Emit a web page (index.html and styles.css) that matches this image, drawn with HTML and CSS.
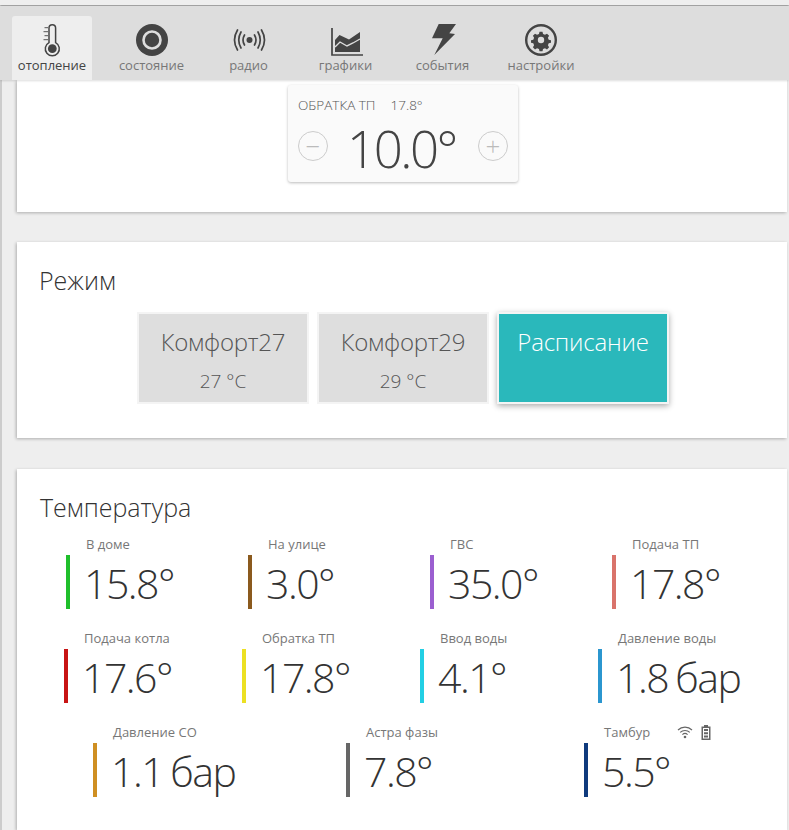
FILE: index.html
```html
<!DOCTYPE html>
<html lang="ru">
<head>
  <meta charset="UTF-8" />
  <title>Отопление</title>
  <link rel="stylesheet" href="styles.css">
</head>
<body>
  <div class="topstrip"></div>
  <nav class="tabs">
    <a class="tab active">
      <svg class="icon" viewBox="0 0 34 34"><path d="M14 5a3.300 3.300 0 0 1 6.600 0v14.600a7 7 0 1 1-6.600 0z" fill="none" stroke="#444" stroke-width="1.500"/><circle cx="17.300" cy="25.700" r="4.400" fill="#444"/><path d="M9.500 4.700h3.500M8.500 8.700h4.500M9.500 12.700h3.500M8.500 16.700h4.500" stroke="#555" stroke-width="1"/></svg>
      отопление
    </a>
    <a class="tab">
      <svg class="icon" viewBox="0 0 34 34"><circle cx="17" cy="17" r="16" fill="#444"/><circle cx="17" cy="17" r="8.500" fill="none" stroke="#ddd" stroke-width="2.600"/></svg>
      состояние
    </a>
    <a class="tab">
      <svg class="icon" viewBox="0 0 34 34"><circle cx="17.500" cy="17" r="3" fill="#444"/><path d="M5.500 7q-6 10 0 20M9 9q-4.500 8 0 16M12.500 12q-3 5 0 10M29.500 7q6 10 0 20M26 9q4.500 8 0 16M22.500 12q3 5 0 10" fill="none" stroke="#444" stroke-width="1.700" stroke-linecap="round"/></svg>
      радио
    </a>
    <a class="tab">
      <svg class="icon" viewBox="0 0 34 34"><path d="M3 5v27h31" fill="none" stroke="#444" stroke-width="1.700"/><path d="M6 17l4.500-5 9.500 4.500L31 9v20H6z" fill="#444"/><path d="M6 24l5-5 7 4 6-3 7-4" fill="none" stroke="#ddd" stroke-width="1.400"/></svg>
      графики
    </a>
    <a class="tab">
      <svg class="icon" viewBox="0 0 34 34"><path d="M12.700 1H30l-6.700 9.300 5.700.7L8.300 32l8.400-16.700H6z" fill="#444"/></svg>
      события
    </a>
    <a class="tab">
      <svg class="icon" viewBox="0 0 34 34"><circle cx="17" cy="17" r="14.800" fill="none" stroke="#444" stroke-width="2.400"/><path d="M15 6h4l.7 3 2.600 1.100 2.700-1.600 2.800 2.800-1.600 2.700 1.100 2.600 3 .7v3.400l-3 .7-1.100 2.600 1.600 2.700-2.800 2.800-2.700-1.600-2.600 1.100-.7 3h-4l-.7-3-2.600-1.100-2.700 1.600-2.800-2.800 1.600-2.700-1.100-2.600-3-.7v-3.400l3-.7 1.100-2.600-1.600-2.700 2.800-2.800 2.700 1.600 2.600-1.100z" fill="#444" transform="translate(4.250 4.250) scale(.75)"/><circle cx="17" cy="17" r="3.200" fill="#ddd"/></svg>
      настройки
    </a>
  </nav>

  <main class="content">
    <section class="card card-setpoint">
      <div class="setpoint">
        <div class="setpoint-head"><span>ОБРАТКА ТП</span><span>17.8°</span></div>
        <div class="setpoint-body">
          <span class="round-btn">−</span>
          <span class="setpoint-value">10.0°</span>
          <span class="round-btn">+</span>
        </div>
      </div>
    </section>

    <section class="card card-mode">
      <h3>Режим</h3>
      <div class="modes">
        <div class="mode"><div class="mode-name">Комфорт27</div><div class="mode-temp">27 °C</div></div>
        <div class="mode"><div class="mode-name">Комфорт29</div><div class="mode-temp">29 °C</div></div>
        <div class="mode selected"><div class="mode-name">Расписание</div></div>
      </div>
    </section>

    <section class="card card-temp">
      <h3>Температура</h3>
      <div class="sensors row-a">
        <div class="sensor"><div class="sensor-label">В доме</div><div class="sensor-value c-green">15.8°</div></div>
        <div class="sensor"><div class="sensor-label">На улице</div><div class="sensor-value c-brown">3.0°</div></div>
        <div class="sensor"><div class="sensor-label">ГВС</div><div class="sensor-value c-purple">35.0°</div></div>
        <div class="sensor"><div class="sensor-label">Подача ТП</div><div class="sensor-value c-rose">17.8°</div></div>
      </div>
      <div class="sensors row-b">
        <div class="sensor"><div class="sensor-label">Подача котла</div><div class="sensor-value c-red">17.6°</div></div>
        <div class="sensor"><div class="sensor-label">Обратка ТП</div><div class="sensor-value c-yellow">17.8°</div></div>
        <div class="sensor"><div class="sensor-label">Ввод воды</div><div class="sensor-value c-cyan">4.1°</div></div>
        <div class="sensor"><div class="sensor-label">Давление воды</div><div class="sensor-value c-blue">1.8 бар</div></div>
      </div>
      <div class="sensors row-c">
        <div class="sensor"><div class="sensor-label">Давление СО</div><div class="sensor-value c-orange">1.1 бар</div></div>
        <div class="sensor"><div class="sensor-label">Астра фазы</div><div class="sensor-value c-gray">7.8°</div></div>
        <div class="sensor">
          <div class="sensor-label">Тамбур
            <span class="status-icons">
              <svg width="16" height="14" viewBox="0 0 16 14"><g fill="none" stroke="#666" stroke-width="1.200"><path d="M1 5a10 10 0 0 1 14 0M3.200 7.400a7 7 0 0 1 9.600 0M5.400 9.600a4 4 0 0 1 5.200 0"/></g><circle cx="8" cy="12" r="1.300" fill="#666"/></svg>
              <svg width="10" height="15" viewBox="0 0 10 15"><path d="M3 0h4v1.500h2.500V15H.5V1.500H3z" fill="#666"/><path d="M2 3h6v10.500H2z" fill="#fff"/><path d="M3 4h4v2H3zM3 7.200h4v2H3zM3 10.400h4v2H3z" fill="#666"/></svg>
            </span>
          </div>
          <div class="sensor-value c-navy">5.5°</div>
        </div>
      </div>
    </section>
  </main>
</body>
</html>
```

FILE: styles.css
```css
body { margin: 0; background: #eee; font-family: "Open Sans", "Noto Sans", sans-serif; color: #444; }

.topstrip { height: 5px; background: #eee; box-shadow: 0 1px 2px #888; }

.tabs { display: flex; gap: 17px; height: 64px; padding: 10px 0 0 12px; margin-top: 1px; background: #ddd; box-shadow: 0 1px 2px #0002; position: relative; }
.tab { width: 80px; height: 64px; display: flex; flex-direction: column; align-items: center; font-size: 13px; line-height: 16px; color: #777; border-radius: 3px 3px 0 0; }
.tab:first-child { margin-right: 2.500px; }
.tab:last-child { margin-left: 1.500px; }
.tab.active { background: #eee; color: #444; }
.icon { width: 34px; height: 34px; margin: 7px 0 0; flex: none; }

.content { border-left: 2px solid #ccc; padding: 0 2px 0 15px; }
.card { background: #fff; box-shadow: -1px 1px 3px #0004; margin-bottom: 30px; }
.card h3 { margin: 0; font-size: 25px; line-height: 34px; font-weight: 300; color: #333; }

.card-setpoint { height: 132px; padding-top: 5px; box-sizing: border-box; }
.setpoint { width: 230px; height: 97px; margin: 0 auto; box-sizing: border-box; padding: 10px; background: #fafafa; border-radius: 3px; box-shadow: 0 1px 3px #0004; position: relative; left: 1px; }
.setpoint-head { display: flex; gap: 15px; font-size: 13.500px; line-height: 20px; font-weight: 300; color: #555; }
.setpoint-body { display: flex; align-items: center; justify-content: space-between; height: 62px; }
.setpoint-value { font-size: 51px; font-weight: 300; line-height: 50px; letter-spacing: -2.500px; color: #444; margin: 3px 0 0 -3px; }
.round-btn { width: 28px; height: 28px; border: 1px solid #ccc; border-radius: 50%; display: flex; align-items: center; justify-content: center; font-size: 26px; font-weight: 300; color: #bbb; }

.card-mode { height: 196px; box-sizing: border-box; padding: 21px 22px 0; margin-bottom: 31px; }
.modes { display: flex; justify-content: center; gap: 8px; margin: 15px 0 0 2px; }
.mode { width: 172px; height: 92px; flex: none; box-sizing: border-box; text-align: center; background: #dedede; border: 2px solid #f4f4f4; color: #555; font-weight: 300; }
.mode-name { font-size: 24px; line-height: 34px; margin-top: 11px; letter-spacing: -.2px; }
.mode-temp { font-size: 19px; line-height: 26px; margin-top: 9px; }
.mode.selected { background: #2ab8bb; border-color: #f4f4f4; color: #fff; box-shadow: 0 2px 6px #0005; }

.card-temp { padding: 21px 23px 0; height: 361px; box-sizing: border-box; margin-bottom: 0; overflow: hidden; }
.sensors { display: grid; height: 94px; margin-left: -23px; }
.row-a { grid-template-columns: repeat(4, 182px); padding-left: 49px; margin-top: 11px; }
.row-b { grid-template-columns: repeat(4, 178px); padding-left: 47px; }
.row-c { grid-template-columns: 253px 238px 160px; padding-left: 76px; }
.sensor-label { margin-left: 20px; font-size: 13px; line-height: 18px; color: #777; display: flex; gap: 27px; }
.sensor-value { height: 54px; margin-top: 2px; border-left: 4px solid #888; padding-left: 14px; font-size: 41px; line-height: 56px; font-weight: 300; color: #333; letter-spacing: -1.500px; word-spacing: -2px; white-space: nowrap; }
.status-icons { display: inline-flex; gap: 8px; align-items: center; }

.c-green { border-color: #1fbf2b; }
.c-brown { border-color: #8b5a1e; }
.c-purple { border-color: #9b5fd0; }
.c-rose { border-color: #d9736b; }
.c-red { border-color: #c81414; }
.c-yellow { border-color: #ece022; }
.c-cyan { border-color: #22cfe4; }
.c-blue { border-color: #2b96cf; }
.c-orange { border-color: #cf8f22; }
.c-gray { border-color: #666; }
.c-navy { border-color: #0f3a7d; }
```
